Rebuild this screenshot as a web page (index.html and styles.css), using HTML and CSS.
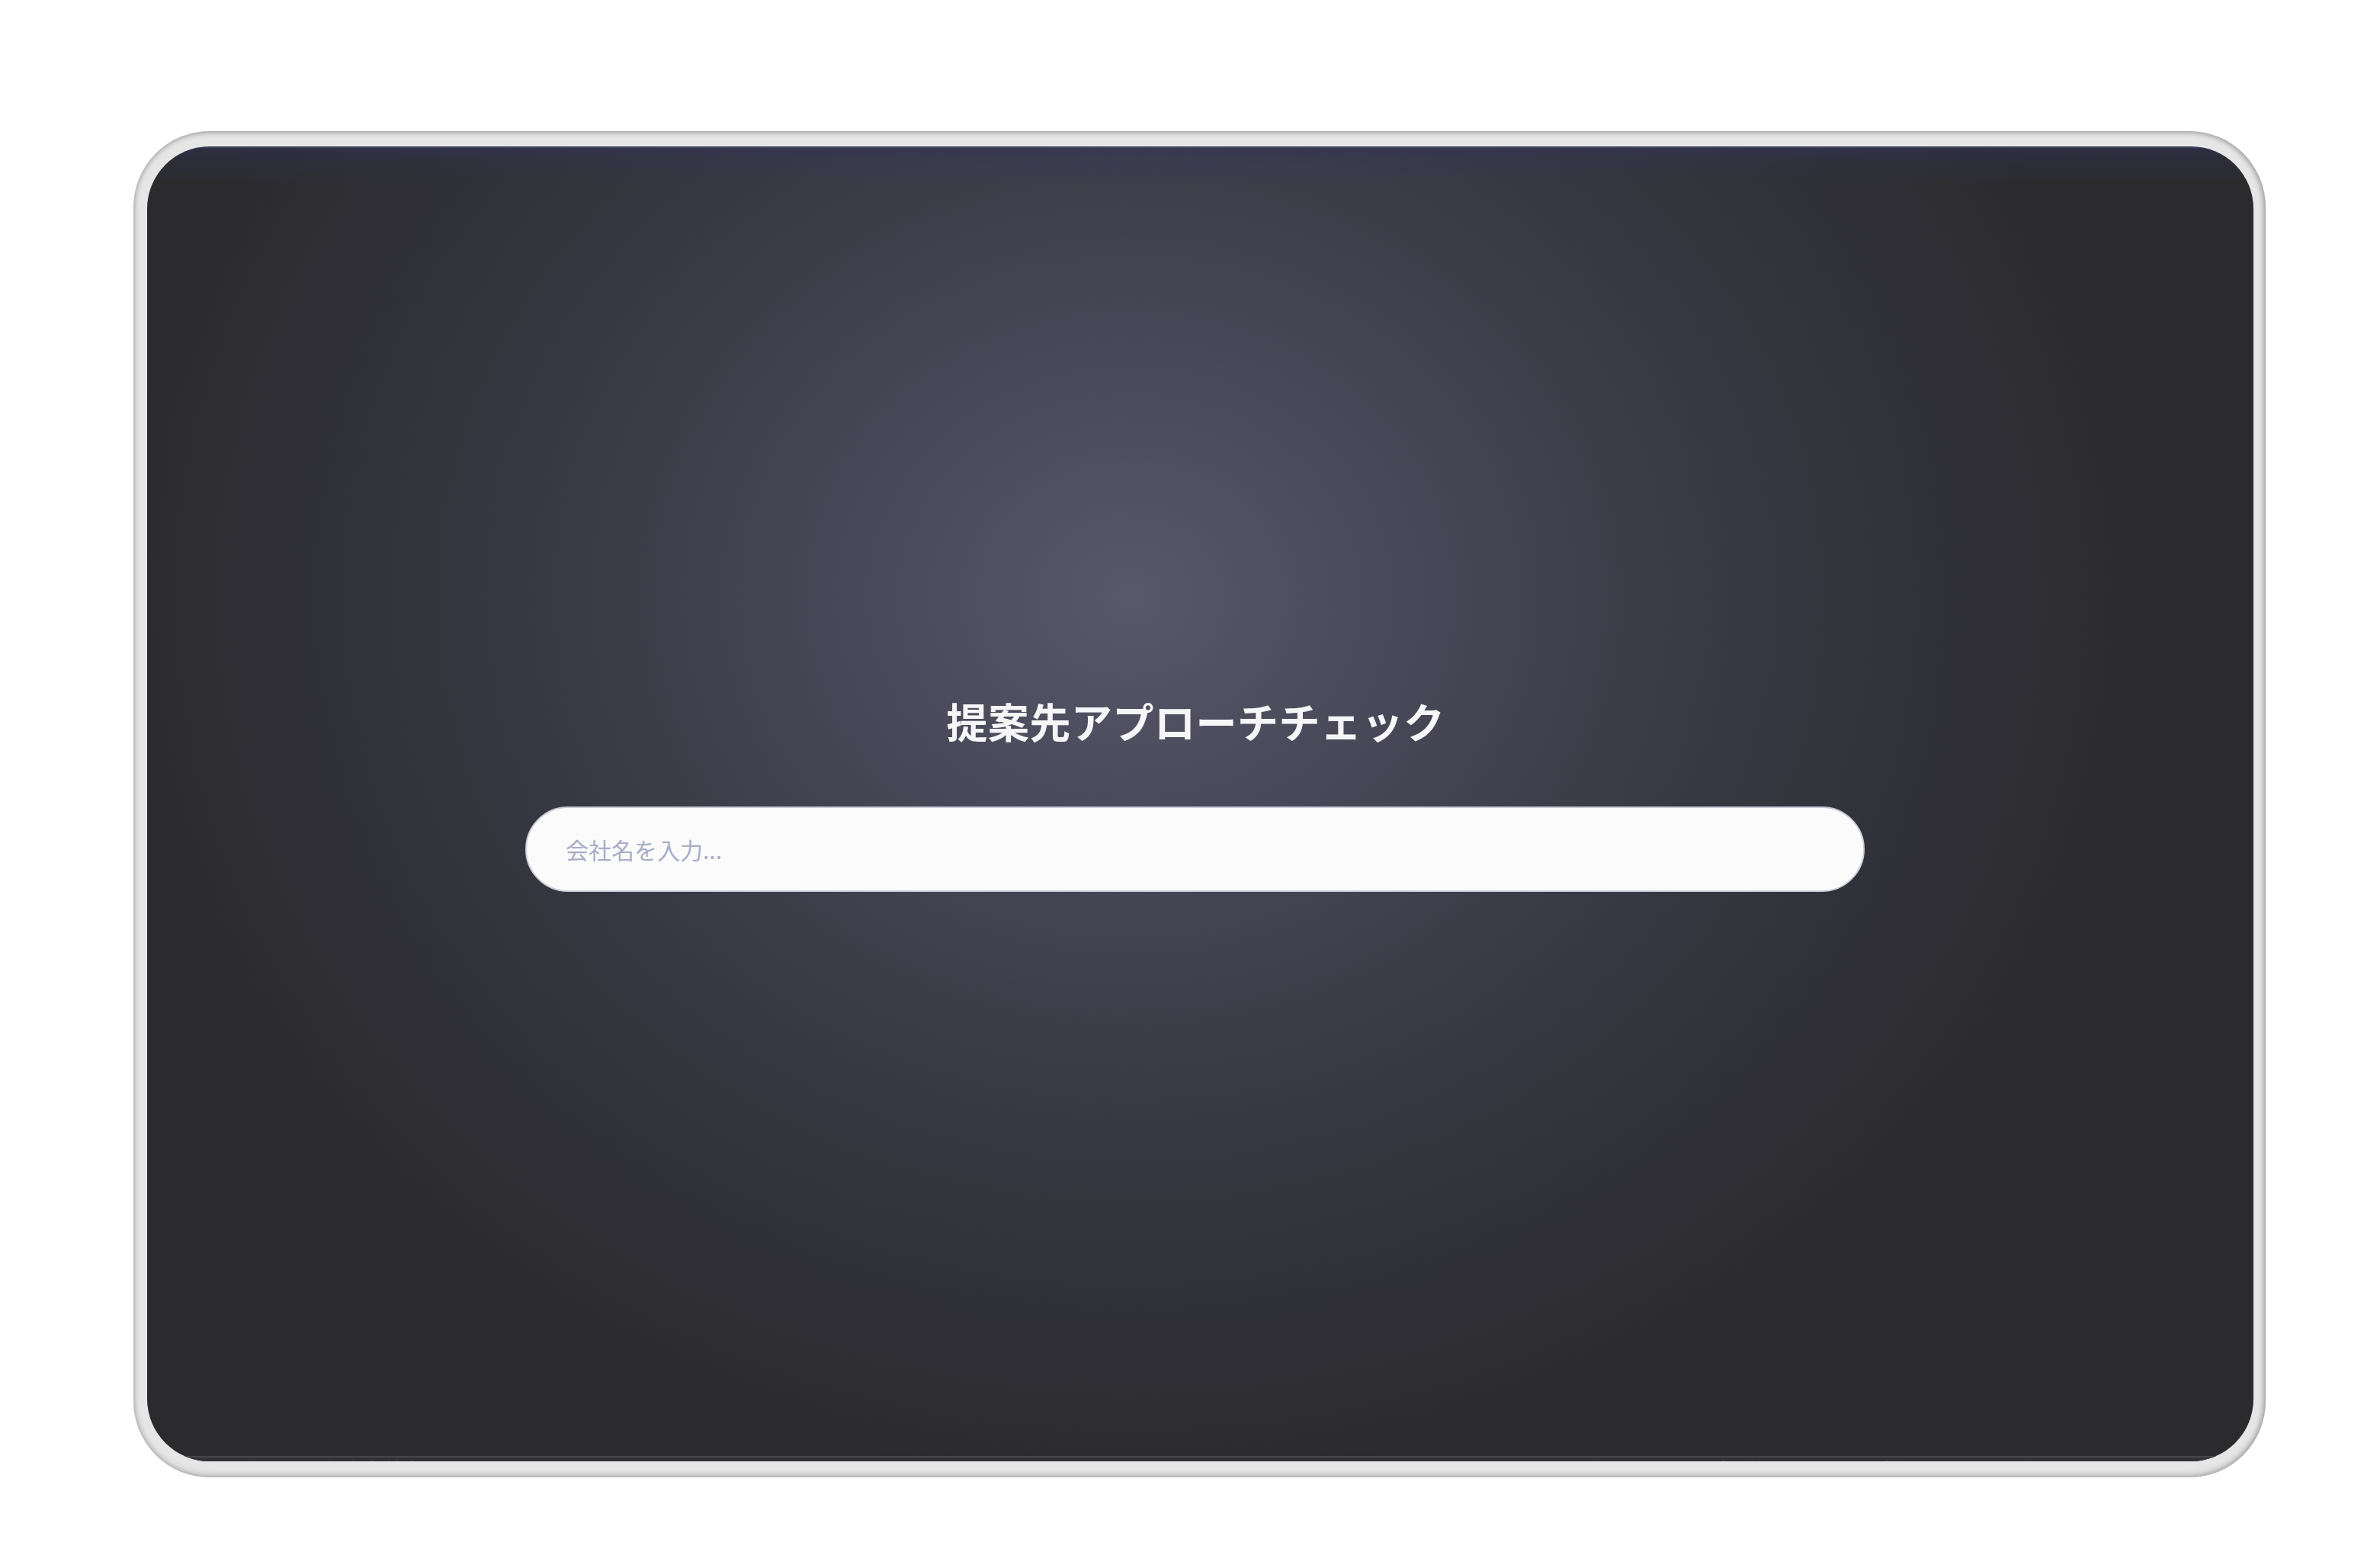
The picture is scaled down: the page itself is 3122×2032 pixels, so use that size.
FILE: index.html
```html
<!DOCTYPE html>
<html lang="ja">
<head>
<meta charset="utf-8">
<title>提案先アプローチチェック</title>
<link rel="stylesheet" href="styles.css">
</head>
<body>
<div class="frame">
  <div class="screen">
    <main class="hero">
      <h1 class="title">提案先アプローチチェック</h1>
      <div class="search">
        <input class="search-input" type="text" placeholder="会社名を入力...">
      </div>
    </main>
    <footer class="statusbar">
      <div class="status-left">
        <span class="status-item">Ai 一覧</span>
        <span class="status-item">提案先 検索 ヘルプ</span>
      </div>
      <div class="status-right">
        <span class="status-item">ホーム</span>
        <span class="status-item">履歴 一覧</span>
        <span class="status-item">設定 詳細</span>
        <span class="status-item">分析</span>
        <span class="status-item">ログ</span>
        <span class="status-item">□</span>
      </div>
    </footer>
  </div>
</div>
</body>
</html>
```

FILE: styles.css
```css
html, body {
  margin: 0;
  padding: 0;
  background: #ffffff;
  width: 3122px;
  height: 2032px;
  overflow: hidden;
}

body {
  font-family: "Noto Sans CJK JP", "Noto Sans", sans-serif;
}

.frame {
  box-sizing: border-box;
  margin: 172px 0 0 175px;
  width: 2797px;
  height: 1766px;
  padding: 20px 16px 21px 18px;
  border-radius: 100px;
  background: #e6e6e6;
  box-shadow: inset 0 3px 7px rgba(0, 0, 0, 0.16), inset 0 -4px 8px rgba(0, 0, 0, 0.14), inset 3px 0 6px rgba(0, 0, 0, 0.06), inset -4px 0 7px rgba(0, 0, 0, 0.14);
}

.screen {
  height: 1725px;
  border-radius: 82px;
  overflow: hidden;
  display: grid;
  grid-template-rows: 1718px 40px;
  background:
    linear-gradient(to bottom, rgba(88, 92, 120, 0.8) 0, rgba(48, 52, 92, 0.45) 3px, rgba(48, 52, 92, 0.22) 18px, rgba(48, 52, 92, 0) 48px),
    radial-gradient(ellipse 1350px 1180px at 1290px 590px, #58586b 0%, #4e4e5f 17%, #434352 36%, #393945 57%, #313138 78%, #2b2b2e 100%);
}

.hero {
  display: flex;
  flex-direction: column;
  align-items: center;
  padding-top: 716px;
}

.title {
  margin: 0 12px 0 0;
  font-size: 54px;
  line-height: 76px;
  font-weight: 700;
  letter-spacing: 0.5px;
  color: #f6f6f8;
}

.search {
  margin-top: 74px;
  width: 1757px;
  margin-right: 14px;
}

.search-input {
  box-sizing: border-box;
  display: block;
  width: 100%;
  height: 112px;
  margin: 0;
  padding: 0 40px 0 51px;
  border: 2px solid #cbcdd9;
  border-radius: 56px;
  background: #fbfbfc;
  font-family: "Noto Sans CJK JP", "Noto Sans", sans-serif;
  font-size: 30px;
  color: #333340;
  outline: none;
}

.search-input::placeholder {
  color: #a9adc5;
}

.statusbar {
  display: flex;
  justify-content: space-between;
  align-items: flex-start;
  border-top: 2px solid #46464b;
  background: #333335;
  padding: 0 60px 0 70px;
}

.status-left,
.status-right {
  display: flex;
  gap: 90px;
}

.status-right {
  gap: 120px;
  padding-right: 90px;
}

.status-item {
  font-size: 24px;
  line-height: 24px;
  margin-top: 3px;
  color: #767678;
  white-space: nowrap;
}
```
